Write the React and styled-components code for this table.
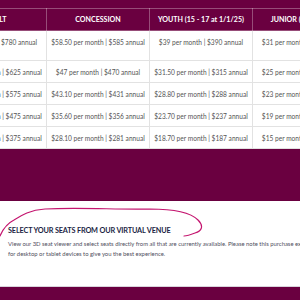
import React from "react";
import styled, { createGlobalStyle } from "styled-components";

const Global = createGlobalStyle`
  html, body { margin: 0; padding: 0; overflow: hidden; background: #6a0040; }
  body { font-family: "Lato", "Open Sans", sans-serif; width: 300px; height: 300px; }
`;

const Page = styled.div`
  width: 300px;
  height: 300px;
  overflow: hidden;
  display: flex;
  flex-direction: column;
  background: #6a0040;
`;

const TableBand = styled.div`
  padding-top: 8px;
  height: 201px;
  flex: none;
  box-sizing: border-box;
  margin-left: -57px;
`;

const Table = styled.table`
  border-collapse: collapse;
  table-layout: fixed;
  width: 412px;
`;

const HeadCell = styled.th`
  width: 103px;
  height: 22px;
  padding: 0;
  box-sizing: border-box;
  border: 1px solid rgba(255, 255, 255, 0.3);
  color: #fff;
  font-size: 7.1px;
  font-weight: 700;
  text-align: center;
  vertical-align: middle;
  white-space: nowrap;
`;

const Row = styled.tr`
  height: ${(p) => p.$h}px;
  background: #fff;
`;

const Cell = styled.td`
  padding: ${(p) => (p.$tall ? "7px 0 0" : "0")};
  box-sizing: border-box;
  border: 1px solid #e2e2e2;
  color: #555;
  font-size: 6.6px;
  text-align: center;
  vertical-align: ${(p) => (p.$tall ? "top" : "middle")};
  white-space: nowrap;
`;

const Venue = styled.section`
  position: relative;
  flex: none;
  background: #fff;
  height: 86px;
  box-sizing: border-box;
  padding: 24px 0 0 8px;
  border-bottom: 1px solid #d9d4dc;
  width: 300px;
`;

const Heading = styled.h2`
  margin: 0;
  color: #1c1f45;
  font-size: 7.3px;
  letter-spacing: -0.15px;
  font-weight: 700;
  line-height: 11px;
  white-space: nowrap;
`;

const Copy = styled.p`
  margin: 3px 0 0;
  color: #4f4f60;
  font-size: 5.9px;
  line-height: 10px;
  width: 350px;
`;

const Scribble = styled.svg`
  position: absolute;
  left: 0;
  top: 0;
  pointer-events: none;
`;

const Bottom = styled.div`
  flex: 1;
  background: #6a0040;
`;

const heads = ["ADULT", "CONCESSION", "YOUTH (15 - 17 at 1/1/25)", "JUNIOR (UNDER 15)"];
const rows = [
  [["$78", "$780"], ["$58.50", "$585"], ["$39", "$390"], ["$31", "$310"]],
  [["$62.50", "$625"], ["$47", "$470"], ["$31.50", "$315"], ["$25", "$250"]],
  [["$57.50", "$575"], ["$43.10", "$431"], ["$28.80", "$288"], ["$23", "$230"]],
  [["$47.50", "$475"], ["$35.60", "$356"], ["$23.70", "$237"], ["$19", "$190"]],
  [["$37.50", "$375"], ["$28.10", "$281"], ["$18.70", "$187"], ["$15", "$150"]],
];

export default function App() {
  return (
    <Page>
      <Global />
      <TableBand>
        <Table>
          <thead>
            <tr>
              {heads.map((h) => (
                <HeadCell key={h}>{h}</HeadCell>
              ))}
            </tr>
          </thead>
          <tbody>
            {rows.map((r, i) => (
              <Row key={i} $h={i === 0 ? 30 : 22}>
                {r.map(([m, a], j) => (
                  <Cell key={j} $tall={i === 0}>
                    {m} per month | {a} annual
                  </Cell>
                ))}
              </Row>
            ))}
          </tbody>
        </Table>
      </TableBand>
      <Venue>
        <Scribble width="300" height="86" viewBox="0 0 300 86">
          <path
            d="M0 35 C3 28 8 22 14 19 C22 14 30 9 45 8 C80 6 120 9 150 8 C170 8 190 11 198 19 C204 25 202 30 195 32 C190 34 187 35 184 35"
            fill="none"
            stroke="#c4156f"
            strokeWidth="1.2"
            strokeLinecap="round"
          />
        </Scribble>
        <Heading>SELECT YOUR SEATS FROM OUR VIRTUAL VENUE</Heading>
        <Copy>
          View our 3D seat viewer and select seats directly from all that are currently available. Please note this purchase experience is designed
          for desktop or tablet devices to give you the best experience.
        </Copy>
      </Venue>
      <Bottom />
    </Page>
  );
}
